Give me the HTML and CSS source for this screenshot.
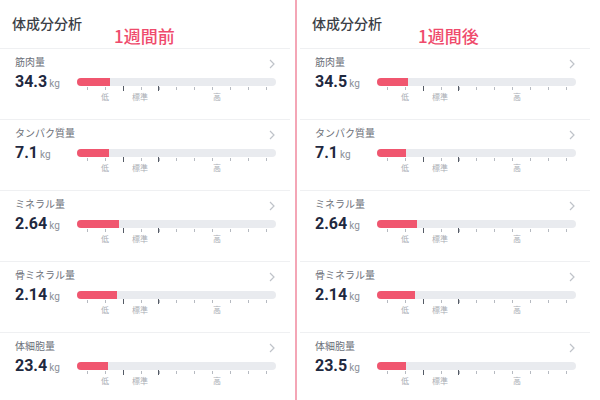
FILE: index.html
```html
<!DOCTYPE html>
<html lang="ja">
<head>
    <meta charset="UTF-8">
    <title>体成分分析 比較</title>
    <link rel="stylesheet" href="styles.css">
</head>
<body>
    <div class="compare">
        <section class="panel panel-before">
            <div class="panel-inner">
                <div class="panel-head">
                    <h2 class="title">体成分分析</h2>
                    <span class="note">1週間前</span>
                </div>

                <div class="item">
                    <div class="item-head">
                        <span class="item-name">筋肉量</span>
                        <svg class="chev" width="6" height="10" viewBox="0 0 6 10"><path d="M1 1l4 4-4 4"/></svg>
                    </div>
                    <div class="item-body">
                        <div class="value">34.3<span class="unit">kg</span></div>
                        <div class="gauge">
                            <div class="bar"><div class="fill" style="width: 33px"></div></div>
                            <div class="ticks"></div>
                            <div class="scale"><span class="lo">低</span><span class="mid">標準</span><span class="hi">高</span></div>
                        </div>
                    </div>
                </div>

                <div class="item">
                    <div class="item-head">
                        <span class="item-name">タンパク質量</span>
                        <svg class="chev" width="6" height="10" viewBox="0 0 6 10"><path d="M1 1l4 4-4 4"/></svg>
                    </div>
                    <div class="item-body">
                        <div class="value">7.1<span class="unit">kg</span></div>
                        <div class="gauge">
                            <div class="bar"><div class="fill" style="width: 32px"></div></div>
                            <div class="ticks"></div>
                            <div class="scale"><span class="lo">低</span><span class="mid">標準</span><span class="hi">高</span></div>
                        </div>
                    </div>
                </div>

                <div class="item">
                    <div class="item-head">
                        <span class="item-name">ミネラル量</span>
                        <svg class="chev" width="6" height="10" viewBox="0 0 6 10"><path d="M1 1l4 4-4 4"/></svg>
                    </div>
                    <div class="item-body">
                        <div class="value">2.64<span class="unit">kg</span></div>
                        <div class="gauge">
                            <div class="bar"><div class="fill" style="width: 42px"></div></div>
                            <div class="ticks"></div>
                            <div class="scale"><span class="lo">低</span><span class="mid">標準</span><span class="hi">高</span></div>
                        </div>
                    </div>
                </div>

                <div class="item">
                    <div class="item-head">
                        <span class="item-name">骨ミネラル量</span>
                        <svg class="chev" width="6" height="10" viewBox="0 0 6 10"><path d="M1 1l4 4-4 4"/></svg>
                    </div>
                    <div class="item-body">
                        <div class="value">2.14<span class="unit">kg</span></div>
                        <div class="gauge">
                            <div class="bar"><div class="fill" style="width: 40px"></div></div>
                            <div class="ticks"></div>
                            <div class="scale"><span class="lo">低</span><span class="mid">標準</span><span class="hi">高</span></div>
                        </div>
                    </div>
                </div>

                <div class="item">
                    <div class="item-head">
                        <span class="item-name">体細胞量</span>
                        <svg class="chev" width="6" height="10" viewBox="0 0 6 10"><path d="M1 1l4 4-4 4"/></svg>
                    </div>
                    <div class="item-body">
                        <div class="value">23.4<span class="unit">kg</span></div>
                        <div class="gauge">
                            <div class="bar"><div class="fill" style="width: 31px"></div></div>
                            <div class="ticks"></div>
                            <div class="scale"><span class="lo">低</span><span class="mid">標準</span><span class="hi">高</span></div>
                        </div>
                    </div>
                </div>
            </div>
        </section>

        <div class="split"></div>

        <section class="panel panel-after">
            <div class="panel-inner">
                <div class="panel-head">
                    <h2 class="title">体成分分析</h2>
                    <span class="note">1週間後</span>
                </div>

                <div class="item">
                    <div class="item-head">
                        <span class="item-name">筋肉量</span>
                        <svg class="chev" width="6" height="10" viewBox="0 0 6 10"><path d="M1 1l4 4-4 4"/></svg>
                    </div>
                    <div class="item-body">
                        <div class="value">34.5<span class="unit">kg</span></div>
                        <div class="gauge">
                            <div class="bar"><div class="fill" style="width: 31px"></div></div>
                            <div class="ticks"></div>
                            <div class="scale"><span class="lo">低</span><span class="mid">標準</span><span class="hi">高</span></div>
                        </div>
                    </div>
                </div>

                <div class="item">
                    <div class="item-head">
                        <span class="item-name">タンパク質量</span>
                        <svg class="chev" width="6" height="10" viewBox="0 0 6 10"><path d="M1 1l4 4-4 4"/></svg>
                    </div>
                    <div class="item-body">
                        <div class="value">7.1<span class="unit">kg</span></div>
                        <div class="gauge">
                            <div class="bar"><div class="fill" style="width: 29px"></div></div>
                            <div class="ticks"></div>
                            <div class="scale"><span class="lo">低</span><span class="mid">標準</span><span class="hi">高</span></div>
                        </div>
                    </div>
                </div>

                <div class="item">
                    <div class="item-head">
                        <span class="item-name">ミネラル量</span>
                        <svg class="chev" width="6" height="10" viewBox="0 0 6 10"><path d="M1 1l4 4-4 4"/></svg>
                    </div>
                    <div class="item-body">
                        <div class="value">2.64<span class="unit">kg</span></div>
                        <div class="gauge">
                            <div class="bar"><div class="fill" style="width: 40px"></div></div>
                            <div class="ticks"></div>
                            <div class="scale"><span class="lo">低</span><span class="mid">標準</span><span class="hi">高</span></div>
                        </div>
                    </div>
                </div>

                <div class="item">
                    <div class="item-head">
                        <span class="item-name">骨ミネラル量</span>
                        <svg class="chev" width="6" height="10" viewBox="0 0 6 10"><path d="M1 1l4 4-4 4"/></svg>
                    </div>
                    <div class="item-body">
                        <div class="value">2.14<span class="unit">kg</span></div>
                        <div class="gauge">
                            <div class="bar"><div class="fill" style="width: 38px"></div></div>
                            <div class="ticks"></div>
                            <div class="scale"><span class="lo">低</span><span class="mid">標準</span><span class="hi">高</span></div>
                        </div>
                    </div>
                </div>

                <div class="item">
                    <div class="item-head">
                        <span class="item-name">体細胞量</span>
                        <svg class="chev" width="6" height="10" viewBox="0 0 6 10"><path d="M1 1l4 4-4 4"/></svg>
                    </div>
                    <div class="item-body">
                        <div class="value">23.5<span class="unit">kg</span></div>
                        <div class="gauge">
                            <div class="bar"><div class="fill" style="width: 29px"></div></div>
                            <div class="ticks"></div>
                            <div class="scale"><span class="lo">低</span><span class="mid">標準</span><span class="hi">高</span></div>
                        </div>
                    </div>
                </div>
            </div>
        </section>
    </div>
</body>
</html>
```

FILE: styles.css
```css
html, body {
    margin: 0;
    padding: 0;
    background: #fff;
}
body {
    font-family: 'Noto Sans CJK JP', 'Noto Sans', sans-serif;
    color: #333;
    overflow: hidden;
}
.compare {
    display: flex;
    height: 400px;
}
.panel {
    height: 400px;
    overflow: hidden;
}
.panel-before {
    width: 295px;
    padding-right: 5px;
    box-sizing: border-box;
}
.panel-after {
    width: 303px;
    padding-left: 3px;
    padding-right: 10px;
    box-sizing: border-box;
}
.split {
    width: 2px;
    background: #f4a6b6;
    flex-shrink: 0;
}
.panel-inner {
    width: 290px;
}

/* ヘッダー */
.panel-head {
    display: flex;
    align-items: flex-start;
    height: 48px;
    box-sizing: border-box;
    padding: 13px 0 0 12px;
}
.title {
    margin: 0;
    font-size: 14px;
    line-height: 20px;
    font-weight: 500;
    color: #3a3e46;
}
.note {
    margin: 13px 0 0 32px;
    font-size: 17px;
    line-height: 20px;
    font-weight: 500;
    color: #ef4b6c;
}
.panel-after .note {
    margin-left: 36px;
}

/* 項目 */
.item {
    height: 71px;
    box-sizing: border-box;
    border-top: 1px solid #eff0f2;
    padding: 6px 14px 0 15px;
}
.item-head {
    display: flex;
    justify-content: space-between;
    align-items: flex-start;
    height: 14px;
}
.item-name {
    font-size: 10px;
    line-height: 14px;
    color: #6c7079;
}
.chev {
    margin-top: 4px;
    margin-right: 1px;
}
.chev path {
    fill: none;
    stroke: #bfc3c9;
    stroke-width: 1.2;
}
.item-body {
    display: flex;
    align-items: flex-start;
}
.value {
    width: 62px;
    margin-top: 3px;
    font-family: 'Roboto', 'Liberation Sans', sans-serif;
    font-size: 16px;
    line-height: 20px;
    font-weight: 700;
    color: #1f2940;
}
.unit {
    margin-left: 2px;
    font-size: 10px;
    font-weight: 400;
    color: #8b9099;
}

/* ゲージ */
.gauge {
    width: 199px;
    padding-top: 9px;
}
.bar {
    height: 8px;
    border-radius: 4px;
    background: #e9ebef;
    overflow: hidden;
}
.fill {
    height: 100%;
    background: #f0566f;
}
.ticks {
    width: 180px;
    height: 5px;
    margin-left: 10px;
    background:
        linear-gradient(#555b66, #555b66) 36px 0 / 1px 5px no-repeat,
        linear-gradient(#555b66, #555b66) 71px 0 / 1px 5px no-repeat,
        repeating-linear-gradient(to right, #b6bac1 0 1px, transparent 1px 17.9px) 0 1px / 100% 3px no-repeat;
}
.scale {
    display: flex;
    height: 10px;
    margin-top: 1px;
    font-size: 8px;
    line-height: 10px;
    color: #a9adb4;
}
.scale .lo {
    margin-left: 24px;
}
.scale .mid {
    margin-left: 23px;
}
.scale .hi {
    margin-left: 65px;
}
```
